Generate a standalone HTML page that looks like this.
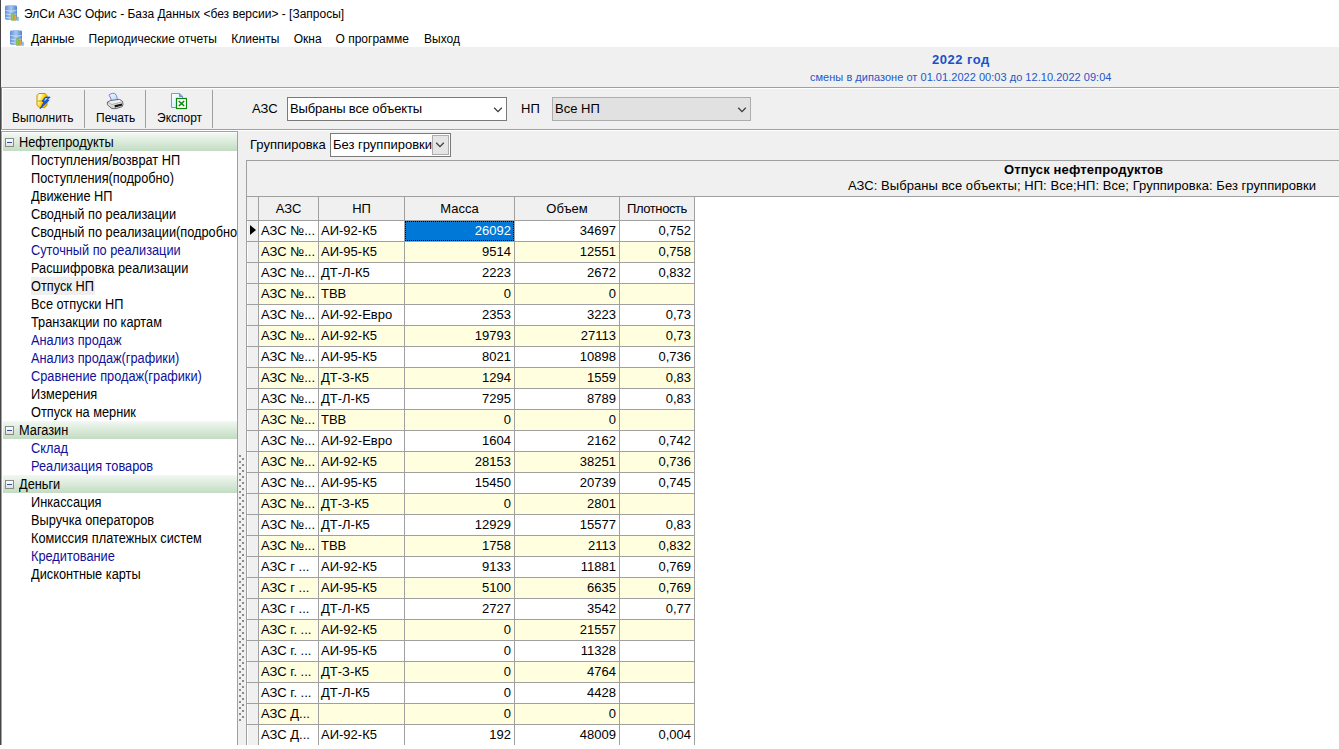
<!DOCTYPE html><html><head><meta charset="utf-8"><style>
*{box-sizing:border-box;margin:0;padding:0}
html,body{width:1339px;height:749px;overflow:hidden;background:#fff;font-family:"Liberation Sans",sans-serif;color:#000}
.a{position:absolute;white-space:nowrap}
svg{display:block}
.t12{font-size:12px;line-height:12px}
.t13{font-size:13px;line-height:13px}
.t11{font-size:11px;line-height:11px}
</style></head><body>
<div class="a" style="left:0;top:0;width:1px;height:745px;background:#464646"></div>
<div class="a" style="left:4px;top:5px;width:16px;height:16px"><svg width="16" height="16" viewBox="0 0 16 16">
<defs><linearGradient id="dbga" x1="0" x2="1" y1="0" y2="0"><stop offset="0" stop-color="#5b8fd8"/><stop offset="0.5" stop-color="#a9c8f0"/><stop offset="1" stop-color="#4f83d0"/></linearGradient></defs>
<path d="M1 1.5 Q1 0 7 0 Q13 0 13 1.5 L13 13.5 Q13 15 7 15 Q1 15 1 13.5 Z" fill="url(#dbga)"/>
<path d="M1.5 5.5 Q7 7 12.5 5.5 M1.5 9 Q7 10.5 12.5 9 M1.5 12.3 Q7 13.8 12.5 12.3" stroke="#d8e6f8" stroke-width="0.8" fill="none"/>
<rect x="7.2" y="8.5" width="2.8" height="7" rx="0.8" fill="#8cce50" stroke="#5a9a32" stroke-width="0.4"/>
<rect x="10" y="10" width="2.3" height="5.5" rx="0.7" fill="#f0a050" stroke="#c87a30" stroke-width="0.4"/>
<rect x="12.6" y="12" width="2" height="3.6" rx="0.7" fill="#78cfee" stroke="#4aa0c8" stroke-width="0.4"/>
</svg></div>
<div class="a t12" style="left:24px;top:8px">ЭлСи АЗС Офис - База Данных &lt;без версии&gt; - [Запросы]</div>
<div class="a" style="left:9px;top:30px;width:16px;height:16px"><svg width="16" height="16" viewBox="0 0 16 16">
<defs><linearGradient id="dbgb" x1="0" x2="1" y1="0" y2="0"><stop offset="0" stop-color="#5b8fd8"/><stop offset="0.5" stop-color="#a9c8f0"/><stop offset="1" stop-color="#4f83d0"/></linearGradient></defs>
<path d="M1 1.5 Q1 0 7 0 Q13 0 13 1.5 L13 13.5 Q13 15 7 15 Q1 15 1 13.5 Z" fill="url(#dbgb)"/>
<path d="M1.5 5.5 Q7 7 12.5 5.5 M1.5 9 Q7 10.5 12.5 9 M1.5 12.3 Q7 13.8 12.5 12.3" stroke="#d8e6f8" stroke-width="0.8" fill="none"/>
<rect x="7.2" y="8.5" width="2.8" height="7" rx="0.8" fill="#8cce50" stroke="#5a9a32" stroke-width="0.4"/>
<rect x="10" y="10" width="2.3" height="5.5" rx="0.7" fill="#f0a050" stroke="#c87a30" stroke-width="0.4"/>
<rect x="12.6" y="12" width="2" height="3.6" rx="0.7" fill="#78cfee" stroke="#4aa0c8" stroke-width="0.4"/>
</svg></div>
<div class="a t12" style="left:31px;top:33px">Данные</div>
<div class="a t12" style="left:88.6px;top:33px">Периодические отчеты</div>
<div class="a t12" style="left:231.2px;top:33px">Клиенты</div>
<div class="a t12" style="left:293.7px;top:33px">Окна</div>
<div class="a t12" style="left:335.5px;top:33px">О программе</div>
<div class="a t12" style="left:424px;top:33px">Выход</div>
<div class="a" style="left:1px;top:47px;width:1338px;height:702px;background:#f0f0f0"></div>
<div class="a" style="left:1px;top:87px;width:1338px;height:1px;background:#a0a0a0"></div>
<div class="a" style="left:1px;top:88px;width:1338px;height:1px;background:#fff"></div>
<div class="a t13" style="left:932px;top:53px;font-weight:bold;letter-spacing:0.5px;color:#2050c8">2022 год</div>
<div class="a t11" style="left:810px;top:72px;color:#2457c8;letter-spacing:0.03px">смены в дипазоне от 01.01.2022 00:03 до 12.10.2022 09:04</div>
<div class="a" style="left:36px;top:93px;width:16px;height:16px"><svg width="16" height="16" viewBox="0 0 16 16">
<defs><linearGradient id="yg" x1="0" x2="1" y1="0" y2="0.6"><stop offset="0" stop-color="#ffe860"/><stop offset="0.3" stop-color="#fffbd0"/><stop offset="0.6" stop-color="#ffd800"/><stop offset="1" stop-color="#e8b000"/></linearGradient></defs>
<path d="M1 2.4 L2.8 0.5 L9 0.5 L11 2.4 L11 12.3 L8.7 14.6 L3.4 14.6 L1 12.3 Z" fill="url(#yg)" stroke="#c89000" stroke-width="1"/>
<path d="M1.5 8 L7 8" stroke="#c89000" stroke-width="0.9"/>
<path d="M9.3 4 L14.2 4 L11.4 7 L13.2 7.3 L4 15.8 L7.6 9.4 L6 8 Z" fill="#1a58d8" stroke="#0a3cc0" stroke-width="0.6"/>
<path d="M9.6 5 L11.8 5 L9.5 7.6 L8 7.8 Z" fill="#a8d8ff"/>
</svg></div>
<div class="a" style="left:102px;top:90px;width:26px;height:22px"><svg width="26" height="22" viewBox="0 0 26 22">
<defs><linearGradient id="pg" x1="0" x2="1" y1="0" y2="1"><stop offset="0" stop-color="#f4faff"/><stop offset="1" stop-color="#a8d8fa"/></linearGradient>
<linearGradient id="bg2" x1="0" x2="0" y1="0" y2="1"><stop offset="0" stop-color="#ffffff"/><stop offset="1" stop-color="#c8c8c8"/></linearGradient></defs>
<path d="M7.2 4.6 L10.2 3.4 L12.8 3.4 L14.6 5.8 L15.2 8.4 L16.2 10 L9.6 11.2 L8.2 6.6 L7.2 6.2 Z" fill="url(#pg)" stroke="#8484d8" stroke-width="1"/>
<path d="M5.4 12 L9 10.4 L17.6 9.4 L20.6 11.4 L21 14.6 L20.2 16.6 L14.2 18.6 L9.8 18.6 L5.4 14.8 Z" fill="url(#bg2)" stroke="#5a5a5a" stroke-width="0.9"/>
<path d="M6 12.4 L10 14.6 L20.2 11.8" stroke="#9a9a9a" stroke-width="0.7" fill="none"/>
<path d="M12.4 15.2 L20 13.4 L20.2 15.4 L13 17.4 Z" fill="#151515"/>
</svg></div>
<div class="a" style="left:171px;top:93px;width:16px;height:17px"><svg width="16" height="17" viewBox="0 0 16 17">
<defs><linearGradient id="xg" x1="0" x2="1" y1="0" y2="1"><stop offset="0" stop-color="#ffffff"/><stop offset="1" stop-color="#bfe8ff"/></linearGradient></defs>
<path d="M0.5 0.5 L8.5 0.5 L11.5 3 L11.5 14.5 L0.5 14.5 Z" fill="url(#xg)" stroke="#8296d6" stroke-width="1"/>
<path d="M8.5 0.5 L8.5 3.5 L11.5 3.5" fill="#5cb4f0" stroke="#8a7ad0" stroke-width="0.9"/>
<rect x="5.5" y="5.5" width="10" height="10" fill="#fff" stroke="#0a8a0a" stroke-width="1.2"/>
<path d="M7.8 8 L13.2 13 M13.2 8 L7.8 13" stroke="#0a8a0a" stroke-width="1.6"/>
</svg></div>
<div class="a t12" style="left:12px;top:112px">Выполнить</div>
<div class="a t12" style="left:96px;top:112px">Печать</div>
<div class="a t12" style="left:157px;top:112px">Экспорт</div>
<div class="a" style="left:84px;top:90px;width:1px;height:38px;background:#a0a0a0"></div>
<div class="a" style="left:145px;top:90px;width:1px;height:38px;background:#a0a0a0"></div>
<div class="a" style="left:212px;top:90px;width:1px;height:38px;background:#a0a0a0"></div>
<div class="a t13" style="left:252px;top:102px">АЗС</div>
<div class="a" style="left:287px;top:97px;width:220px;height:24px;background:#fff;border:1px solid #7a7a7a"></div>
<div class="a t13" style="left:290px;top:102px;letter-spacing:-0.15px">Выбраны все объекты</div>
<div class="a" style="left:493px;top:106px;width:10px;height:7px"><svg width="10" height="7" viewBox="0 0 10 7"><path d="M1.2 1.8 L5 5.6 L8.8 1.8" stroke="#3a3a3a" stroke-width="1.25" fill="none"/></svg></div>
<div class="a t13" style="left:521px;top:102px">НП</div>
<div class="a" style="left:552px;top:97px;width:199px;height:24px;background:#e1e1e1;border:1px solid #adadad"></div>
<div class="a t13" style="left:555px;top:102px">Все НП</div>
<div class="a" style="left:737px;top:106px;width:10px;height:7px"><svg width="10" height="7" viewBox="0 0 10 7"><path d="M1.2 1.8 L5 5.6 L8.8 1.8" stroke="#3a3a3a" stroke-width="1.25" fill="none"/></svg></div>
<div class="a" style="left:1px;top:129px;width:1338px;height:1px;background:#a0a0a0"></div>
<div class="a" style="left:1px;top:130px;width:1338px;height:1px;background:#fff"></div>
<div class="a" style="left:1px;top:131px;width:237px;height:614px;background:#fff;border:1px solid #a0a4a8;border-bottom:none"></div>
<div class="a" style="left:1px;top:88px;width:1px;height:41px;background:#8a8a8a"></div>
<div class="a" style="left:2px;top:88px;width:1px;height:41px;background:#fff"></div>
<div class="a" style="left:3px;top:133px;width:234px;height:18px;background:linear-gradient(#f2f8f2,#c2dcc2)"></div>
<div class="a" style="left:5px;top:138px;width:9px;height:9px;border:1px solid #8a8a8a;background:linear-gradient(#fff,#e0e0e0)"><div style="position:absolute;left:1px;top:3px;width:5px;height:1px;background:#3050a0"></div></div>
<div class="a" style="left:19px;top:135px;font-size:14px;line-height:14px;transform:scaleX(0.912);transform-origin:0 0">Нефтепродукты</div>
<div class="a" style="left:31px;top:153px;width:206px;height:16px;overflow:hidden"><div style="font-size:14px;line-height:14px;color:#000;transform:scaleX(0.912);transform-origin:0 0;white-space:nowrap">Поступления/возврат НП</div></div>
<div class="a" style="left:31px;top:171px;width:206px;height:16px;overflow:hidden"><div style="font-size:14px;line-height:14px;color:#000;transform:scaleX(0.912);transform-origin:0 0;white-space:nowrap">Поступления(подробно)</div></div>
<div class="a" style="left:31px;top:189px;width:206px;height:16px;overflow:hidden"><div style="font-size:14px;line-height:14px;color:#000;transform:scaleX(0.912);transform-origin:0 0;white-space:nowrap">Движение НП</div></div>
<div class="a" style="left:31px;top:207px;width:206px;height:16px;overflow:hidden"><div style="font-size:14px;line-height:14px;color:#000;transform:scaleX(0.912);transform-origin:0 0;white-space:nowrap">Сводный по реализации</div></div>
<div class="a" style="left:31px;top:225px;width:206px;height:16px;overflow:hidden"><div style="font-size:14px;line-height:14px;color:#000;transform:scaleX(0.912);transform-origin:0 0;white-space:nowrap">Сводный по реализации(подробно)</div></div>
<div class="a" style="left:31px;top:243px;width:206px;height:16px;overflow:hidden"><div style="font-size:14px;line-height:14px;color:#10109a;transform:scaleX(0.912);transform-origin:0 0;white-space:nowrap">Суточный по реализации</div></div>
<div class="a" style="left:31px;top:261px;width:206px;height:16px;overflow:hidden"><div style="font-size:14px;line-height:14px;color:#000;transform:scaleX(0.912);transform-origin:0 0;white-space:nowrap">Расшифровка реализации</div></div>
<div class="a" style="left:31px;top:277px;width:64px;height:18px;background:#efefef"></div>
<div class="a" style="left:31px;top:279px;width:206px;height:16px;overflow:hidden"><div style="font-size:14px;line-height:14px;color:#000;transform:scaleX(0.912);transform-origin:0 0;white-space:nowrap">Отпуск НП</div></div>
<div class="a" style="left:31px;top:297px;width:206px;height:16px;overflow:hidden"><div style="font-size:14px;line-height:14px;color:#000;transform:scaleX(0.912);transform-origin:0 0;white-space:nowrap">Все отпуски НП</div></div>
<div class="a" style="left:31px;top:315px;width:206px;height:16px;overflow:hidden"><div style="font-size:14px;line-height:14px;color:#000;transform:scaleX(0.912);transform-origin:0 0;white-space:nowrap">Транзакции по картам</div></div>
<div class="a" style="left:31px;top:333px;width:206px;height:16px;overflow:hidden"><div style="font-size:14px;line-height:14px;color:#10109a;transform:scaleX(0.912);transform-origin:0 0;white-space:nowrap">Анализ продаж</div></div>
<div class="a" style="left:31px;top:351px;width:206px;height:16px;overflow:hidden"><div style="font-size:14px;line-height:14px;color:#10109a;transform:scaleX(0.912);transform-origin:0 0;white-space:nowrap">Анализ продаж(графики)</div></div>
<div class="a" style="left:31px;top:369px;width:206px;height:16px;overflow:hidden"><div style="font-size:14px;line-height:14px;color:#10109a;transform:scaleX(0.912);transform-origin:0 0;white-space:nowrap">Сравнение продаж(графики)</div></div>
<div class="a" style="left:31px;top:387px;width:206px;height:16px;overflow:hidden"><div style="font-size:14px;line-height:14px;color:#000;transform:scaleX(0.912);transform-origin:0 0;white-space:nowrap">Измерения</div></div>
<div class="a" style="left:31px;top:405px;width:206px;height:16px;overflow:hidden"><div style="font-size:14px;line-height:14px;color:#000;transform:scaleX(0.912);transform-origin:0 0;white-space:nowrap">Отпуск на мерник</div></div>
<div class="a" style="left:3px;top:421px;width:234px;height:18px;background:linear-gradient(#f2f8f2,#c2dcc2)"></div>
<div class="a" style="left:5px;top:426px;width:9px;height:9px;border:1px solid #8a8a8a;background:linear-gradient(#fff,#e0e0e0)"><div style="position:absolute;left:1px;top:3px;width:5px;height:1px;background:#3050a0"></div></div>
<div class="a" style="left:19px;top:423px;font-size:14px;line-height:14px;transform:scaleX(0.912);transform-origin:0 0">Магазин</div>
<div class="a" style="left:31px;top:441px;width:206px;height:16px;overflow:hidden"><div style="font-size:14px;line-height:14px;color:#10109a;transform:scaleX(0.912);transform-origin:0 0;white-space:nowrap">Склад</div></div>
<div class="a" style="left:31px;top:459px;width:206px;height:16px;overflow:hidden"><div style="font-size:14px;line-height:14px;color:#10109a;transform:scaleX(0.912);transform-origin:0 0;white-space:nowrap">Реализация товаров</div></div>
<div class="a" style="left:3px;top:475px;width:234px;height:18px;background:linear-gradient(#f2f8f2,#c2dcc2)"></div>
<div class="a" style="left:5px;top:480px;width:9px;height:9px;border:1px solid #8a8a8a;background:linear-gradient(#fff,#e0e0e0)"><div style="position:absolute;left:1px;top:3px;width:5px;height:1px;background:#3050a0"></div></div>
<div class="a" style="left:19px;top:477px;font-size:14px;line-height:14px;transform:scaleX(0.912);transform-origin:0 0">Деньги</div>
<div class="a" style="left:31px;top:495px;width:206px;height:16px;overflow:hidden"><div style="font-size:14px;line-height:14px;color:#000;transform:scaleX(0.912);transform-origin:0 0;white-space:nowrap">Инкассация</div></div>
<div class="a" style="left:31px;top:513px;width:206px;height:16px;overflow:hidden"><div style="font-size:14px;line-height:14px;color:#000;transform:scaleX(0.912);transform-origin:0 0;white-space:nowrap">Выручка операторов</div></div>
<div class="a" style="left:31px;top:531px;width:206px;height:16px;overflow:hidden"><div style="font-size:14px;line-height:14px;color:#000;transform:scaleX(0.912);transform-origin:0 0;white-space:nowrap">Комиссия платежных систем</div></div>
<div class="a" style="left:31px;top:549px;width:206px;height:16px;overflow:hidden"><div style="font-size:14px;line-height:14px;color:#10109a;transform:scaleX(0.912);transform-origin:0 0;white-space:nowrap">Кредитование</div></div>
<div class="a" style="left:31px;top:567px;width:206px;height:16px;overflow:hidden"><div style="font-size:14px;line-height:14px;color:#000;transform:scaleX(0.912);transform-origin:0 0;white-space:nowrap">Дисконтные карты</div></div>
<div class="a" style="left:239px;top:455px;width:2px;height:2px;background:#8c8c8c"></div>
<div class="a" style="left:242px;top:458px;width:2px;height:2px;background:#8c8c8c"></div>
<div class="a" style="left:239px;top:461px;width:2px;height:2px;background:#8c8c8c"></div>
<div class="a" style="left:242px;top:464px;width:2px;height:2px;background:#8c8c8c"></div>
<div class="a" style="left:239px;top:467px;width:2px;height:2px;background:#8c8c8c"></div>
<div class="a" style="left:242px;top:470px;width:2px;height:2px;background:#8c8c8c"></div>
<div class="a" style="left:239px;top:473px;width:2px;height:2px;background:#8c8c8c"></div>
<div class="a" style="left:242px;top:476px;width:2px;height:2px;background:#8c8c8c"></div>
<div class="a" style="left:239px;top:479px;width:2px;height:2px;background:#8c8c8c"></div>
<div class="a" style="left:242px;top:482px;width:2px;height:2px;background:#8c8c8c"></div>
<div class="a" style="left:239px;top:485px;width:2px;height:2px;background:#8c8c8c"></div>
<div class="a" style="left:242px;top:488px;width:2px;height:2px;background:#8c8c8c"></div>
<div class="a" style="left:239px;top:491px;width:2px;height:2px;background:#8c8c8c"></div>
<div class="a" style="left:242px;top:494px;width:2px;height:2px;background:#8c8c8c"></div>
<div class="a" style="left:239px;top:497px;width:2px;height:2px;background:#8c8c8c"></div>
<div class="a" style="left:242px;top:500px;width:2px;height:2px;background:#8c8c8c"></div>
<div class="a" style="left:239px;top:503px;width:2px;height:2px;background:#8c8c8c"></div>
<div class="a" style="left:242px;top:506px;width:2px;height:2px;background:#8c8c8c"></div>
<div class="a" style="left:239px;top:509px;width:2px;height:2px;background:#8c8c8c"></div>
<div class="a" style="left:242px;top:512px;width:2px;height:2px;background:#8c8c8c"></div>
<div class="a" style="left:239px;top:515px;width:2px;height:2px;background:#8c8c8c"></div>
<div class="a" style="left:242px;top:518px;width:2px;height:2px;background:#8c8c8c"></div>
<div class="a" style="left:239px;top:521px;width:2px;height:2px;background:#8c8c8c"></div>
<div class="a" style="left:242px;top:524px;width:2px;height:2px;background:#8c8c8c"></div>
<div class="a" style="left:239px;top:527px;width:2px;height:2px;background:#8c8c8c"></div>
<div class="a" style="left:242px;top:530px;width:2px;height:2px;background:#8c8c8c"></div>
<div class="a" style="left:239px;top:533px;width:2px;height:2px;background:#8c8c8c"></div>
<div class="a" style="left:242px;top:536px;width:2px;height:2px;background:#8c8c8c"></div>
<div class="a" style="left:239px;top:539px;width:2px;height:2px;background:#8c8c8c"></div>
<div class="a" style="left:242px;top:542px;width:2px;height:2px;background:#8c8c8c"></div>
<div class="a" style="left:239px;top:545px;width:2px;height:2px;background:#8c8c8c"></div>
<div class="a" style="left:242px;top:548px;width:2px;height:2px;background:#8c8c8c"></div>
<div class="a" style="left:239px;top:551px;width:2px;height:2px;background:#8c8c8c"></div>
<div class="a" style="left:242px;top:554px;width:2px;height:2px;background:#8c8c8c"></div>
<div class="a" style="left:239px;top:557px;width:2px;height:2px;background:#8c8c8c"></div>
<div class="a" style="left:242px;top:560px;width:2px;height:2px;background:#8c8c8c"></div>
<div class="a" style="left:239px;top:563px;width:2px;height:2px;background:#8c8c8c"></div>
<div class="a" style="left:242px;top:566px;width:2px;height:2px;background:#8c8c8c"></div>
<div class="a" style="left:239px;top:569px;width:2px;height:2px;background:#8c8c8c"></div>
<div class="a" style="left:242px;top:572px;width:2px;height:2px;background:#8c8c8c"></div>
<div class="a" style="left:239px;top:575px;width:2px;height:2px;background:#8c8c8c"></div>
<div class="a" style="left:242px;top:578px;width:2px;height:2px;background:#8c8c8c"></div>
<div class="a" style="left:239px;top:581px;width:2px;height:2px;background:#8c8c8c"></div>
<div class="a" style="left:242px;top:584px;width:2px;height:2px;background:#8c8c8c"></div>
<div class="a" style="left:239px;top:587px;width:2px;height:2px;background:#8c8c8c"></div>
<div class="a" style="left:242px;top:590px;width:2px;height:2px;background:#8c8c8c"></div>
<div class="a" style="left:239px;top:593px;width:2px;height:2px;background:#8c8c8c"></div>
<div class="a" style="left:242px;top:596px;width:2px;height:2px;background:#8c8c8c"></div>
<div class="a" style="left:239px;top:599px;width:2px;height:2px;background:#8c8c8c"></div>
<div class="a" style="left:242px;top:602px;width:2px;height:2px;background:#8c8c8c"></div>
<div class="a" style="left:239px;top:605px;width:2px;height:2px;background:#8c8c8c"></div>
<div class="a" style="left:242px;top:608px;width:2px;height:2px;background:#8c8c8c"></div>
<div class="a" style="left:239px;top:611px;width:2px;height:2px;background:#8c8c8c"></div>
<div class="a" style="left:242px;top:614px;width:2px;height:2px;background:#8c8c8c"></div>
<div class="a" style="left:239px;top:617px;width:2px;height:2px;background:#8c8c8c"></div>
<div class="a" style="left:242px;top:620px;width:2px;height:2px;background:#8c8c8c"></div>
<div class="a" style="left:239px;top:623px;width:2px;height:2px;background:#8c8c8c"></div>
<div class="a" style="left:242px;top:626px;width:2px;height:2px;background:#8c8c8c"></div>
<div class="a" style="left:239px;top:629px;width:2px;height:2px;background:#8c8c8c"></div>
<div class="a" style="left:242px;top:632px;width:2px;height:2px;background:#8c8c8c"></div>
<div class="a" style="left:239px;top:635px;width:2px;height:2px;background:#8c8c8c"></div>
<div class="a" style="left:242px;top:638px;width:2px;height:2px;background:#8c8c8c"></div>
<div class="a" style="left:239px;top:641px;width:2px;height:2px;background:#8c8c8c"></div>
<div class="a" style="left:242px;top:644px;width:2px;height:2px;background:#8c8c8c"></div>
<div class="a" style="left:239px;top:647px;width:2px;height:2px;background:#8c8c8c"></div>
<div class="a" style="left:242px;top:650px;width:2px;height:2px;background:#8c8c8c"></div>
<div class="a" style="left:239px;top:653px;width:2px;height:2px;background:#8c8c8c"></div>
<div class="a" style="left:242px;top:656px;width:2px;height:2px;background:#8c8c8c"></div>
<div class="a" style="left:239px;top:659px;width:2px;height:2px;background:#8c8c8c"></div>
<div class="a" style="left:242px;top:662px;width:2px;height:2px;background:#8c8c8c"></div>
<div class="a" style="left:239px;top:665px;width:2px;height:2px;background:#8c8c8c"></div>
<div class="a" style="left:242px;top:668px;width:2px;height:2px;background:#8c8c8c"></div>
<div class="a" style="left:239px;top:671px;width:2px;height:2px;background:#8c8c8c"></div>
<div class="a" style="left:242px;top:674px;width:2px;height:2px;background:#8c8c8c"></div>
<div class="a" style="left:239px;top:677px;width:2px;height:2px;background:#8c8c8c"></div>
<div class="a" style="left:242px;top:680px;width:2px;height:2px;background:#8c8c8c"></div>
<div class="a" style="left:239px;top:683px;width:2px;height:2px;background:#8c8c8c"></div>
<div class="a" style="left:242px;top:686px;width:2px;height:2px;background:#8c8c8c"></div>
<div class="a" style="left:239px;top:689px;width:2px;height:2px;background:#8c8c8c"></div>
<div class="a" style="left:242px;top:692px;width:2px;height:2px;background:#8c8c8c"></div>
<div class="a" style="left:239px;top:695px;width:2px;height:2px;background:#8c8c8c"></div>
<div class="a" style="left:242px;top:698px;width:2px;height:2px;background:#8c8c8c"></div>
<div class="a" style="left:239px;top:701px;width:2px;height:2px;background:#8c8c8c"></div>
<div class="a" style="left:242px;top:704px;width:2px;height:2px;background:#8c8c8c"></div>
<div class="a" style="left:239px;top:707px;width:2px;height:2px;background:#8c8c8c"></div>
<div class="a" style="left:242px;top:710px;width:2px;height:2px;background:#8c8c8c"></div>
<div class="a" style="left:239px;top:713px;width:2px;height:2px;background:#8c8c8c"></div>
<div class="a" style="left:242px;top:716px;width:2px;height:2px;background:#8c8c8c"></div>
<div class="a" style="left:239px;top:719px;width:2px;height:2px;background:#8c8c8c"></div>
<div class="a" style="left:237px;top:131px;width:1px;height:614px;background:#a0a0a0"></div>
<div class="a t13" style="left:250px;top:138px">Группировка</div>
<div class="a" style="left:330px;top:133px;width:121px;height:24px;background:#fff;border:1px solid #7a7a7a"></div>
<div class="a t13" style="left:333px;top:138px;width:99px;height:16px;overflow:hidden">Без группировки</div>
<div class="a" style="left:432px;top:135px;width:17px;height:20px;background:#e5e5e5;border:1px solid #adadad"></div>
<div class="a" style="left:435px;top:141px;width:10px;height:7px"><svg width="10" height="7" viewBox="0 0 10 7"><path d="M1.2 1.8 L5 5.6 L8.8 1.8" stroke="#3a3a3a" stroke-width="1.25" fill="none"/></svg></div>
<div class="a" style="left:246px;top:160px;width:1093px;height:36px;border-top:1px solid #a0a0a0;border-left:1px solid #a0a0a0"></div>
<div class="a t13" style="left:1004px;top:163px;font-weight:bold;letter-spacing:0.14px">Отпуск нефтепродуктов</div>
<div class="a t13" style="left:848px;top:179px;letter-spacing:0.05px">АЗС: Выбраны все объекты; НП: Все;НП: Все; Группировка: Без группировки</div>
<div class="a" style="left:246px;top:196px;width:449px;height:549px;background:#a0a0a0"></div>
<div class="a t13" style="left:247px;top:197px;width:11px;height:23px;background:#f0f0f0;text-align:center;padding-top:5px;"></div>
<div class="a t13" style="left:259px;top:197px;width:59px;height:23px;background:#f0f0f0;text-align:center;padding-top:5px;">АЗС</div>
<div class="a t13" style="left:319px;top:197px;width:85px;height:23px;background:#f0f0f0;text-align:center;padding-top:5px;">НП</div>
<div class="a t13" style="left:405px;top:197px;width:109px;height:23px;background:#f0f0f0;text-align:center;padding-top:5px;">Масса</div>
<div class="a t13" style="left:515px;top:197px;width:104px;height:23px;background:#f0f0f0;text-align:center;padding-top:5px;">Объем</div>
<div class="a t13" style="left:620px;top:197px;width:74px;height:23px;background:#f0f0f0;text-align:center;padding-top:5px;letter-spacing:-0.4px">Плотность</div>
<div class="a" style="left:247px;top:221px;width:11px;height:20px;background:#f0f0f0;border-left:1px solid #fff"></div>
<div class="a" style="left:250px;top:225px;width:0;height:0;border-top:5.5px solid transparent;border-bottom:5.5px solid transparent;border-left:6px solid #000"></div>
<div class="a t13" style="left:259px;top:221px;width:59px;height:20px;background:#fff;color:#000;text-align:left;padding-left:2px;padding-top:3px;overflow:hidden;">АЗС №...</div>
<div class="a t13" style="left:319px;top:221px;width:85px;height:20px;background:#fff;color:#000;text-align:left;padding-left:2px;padding-top:3px;overflow:hidden;">АИ-92-К5</div>
<div class="a t13" style="left:405px;top:221px;width:109px;height:20px;background:#0078d7;color:#fff;text-align:right;padding-right:3px;padding-top:3px;overflow:hidden;outline:1px dotted #000;outline-offset:-1px;">26092</div>
<div class="a t13" style="left:515px;top:221px;width:104px;height:20px;background:#fff;color:#000;text-align:right;padding-right:3px;padding-top:3px;overflow:hidden;">34697</div>
<div class="a t13" style="left:620px;top:221px;width:74px;height:20px;background:#fff;color:#000;text-align:right;padding-right:3px;padding-top:3px;overflow:hidden;">0,752</div>
<div class="a" style="left:247px;top:242px;width:11px;height:20px;background:#f0f0f0;border-left:1px solid #fff"></div>
<div class="a t13" style="left:259px;top:242px;width:59px;height:20px;background:#ffffe0;color:#000;text-align:left;padding-left:2px;padding-top:3px;overflow:hidden;">АЗС №...</div>
<div class="a t13" style="left:319px;top:242px;width:85px;height:20px;background:#ffffe0;color:#000;text-align:left;padding-left:2px;padding-top:3px;overflow:hidden;">АИ-95-К5</div>
<div class="a t13" style="left:405px;top:242px;width:109px;height:20px;background:#ffffe0;color:#000;text-align:right;padding-right:3px;padding-top:3px;overflow:hidden;">9514</div>
<div class="a t13" style="left:515px;top:242px;width:104px;height:20px;background:#ffffe0;color:#000;text-align:right;padding-right:3px;padding-top:3px;overflow:hidden;">12551</div>
<div class="a t13" style="left:620px;top:242px;width:74px;height:20px;background:#ffffe0;color:#000;text-align:right;padding-right:3px;padding-top:3px;overflow:hidden;">0,758</div>
<div class="a" style="left:247px;top:263px;width:11px;height:20px;background:#f0f0f0;border-left:1px solid #fff"></div>
<div class="a t13" style="left:259px;top:263px;width:59px;height:20px;background:#fff;color:#000;text-align:left;padding-left:2px;padding-top:3px;overflow:hidden;">АЗС №...</div>
<div class="a t13" style="left:319px;top:263px;width:85px;height:20px;background:#fff;color:#000;text-align:left;padding-left:2px;padding-top:3px;overflow:hidden;">ДТ-Л-К5</div>
<div class="a t13" style="left:405px;top:263px;width:109px;height:20px;background:#fff;color:#000;text-align:right;padding-right:3px;padding-top:3px;overflow:hidden;">2223</div>
<div class="a t13" style="left:515px;top:263px;width:104px;height:20px;background:#fff;color:#000;text-align:right;padding-right:3px;padding-top:3px;overflow:hidden;">2672</div>
<div class="a t13" style="left:620px;top:263px;width:74px;height:20px;background:#fff;color:#000;text-align:right;padding-right:3px;padding-top:3px;overflow:hidden;">0,832</div>
<div class="a" style="left:247px;top:284px;width:11px;height:20px;background:#f0f0f0;border-left:1px solid #fff"></div>
<div class="a t13" style="left:259px;top:284px;width:59px;height:20px;background:#ffffe0;color:#000;text-align:left;padding-left:2px;padding-top:3px;overflow:hidden;">АЗС №...</div>
<div class="a t13" style="left:319px;top:284px;width:85px;height:20px;background:#ffffe0;color:#000;text-align:left;padding-left:2px;padding-top:3px;overflow:hidden;">ТВВ</div>
<div class="a t13" style="left:405px;top:284px;width:109px;height:20px;background:#ffffe0;color:#000;text-align:right;padding-right:3px;padding-top:3px;overflow:hidden;">0</div>
<div class="a t13" style="left:515px;top:284px;width:104px;height:20px;background:#ffffe0;color:#000;text-align:right;padding-right:3px;padding-top:3px;overflow:hidden;">0</div>
<div class="a t13" style="left:620px;top:284px;width:74px;height:20px;background:#ffffe0;color:#000;text-align:right;padding-right:3px;padding-top:3px;overflow:hidden;"></div>
<div class="a" style="left:247px;top:305px;width:11px;height:20px;background:#f0f0f0;border-left:1px solid #fff"></div>
<div class="a t13" style="left:259px;top:305px;width:59px;height:20px;background:#fff;color:#000;text-align:left;padding-left:2px;padding-top:3px;overflow:hidden;">АЗС №...</div>
<div class="a t13" style="left:319px;top:305px;width:85px;height:20px;background:#fff;color:#000;text-align:left;padding-left:2px;padding-top:3px;overflow:hidden;">АИ-92-Евро</div>
<div class="a t13" style="left:405px;top:305px;width:109px;height:20px;background:#fff;color:#000;text-align:right;padding-right:3px;padding-top:3px;overflow:hidden;">2353</div>
<div class="a t13" style="left:515px;top:305px;width:104px;height:20px;background:#fff;color:#000;text-align:right;padding-right:3px;padding-top:3px;overflow:hidden;">3223</div>
<div class="a t13" style="left:620px;top:305px;width:74px;height:20px;background:#fff;color:#000;text-align:right;padding-right:3px;padding-top:3px;overflow:hidden;">0,73</div>
<div class="a" style="left:247px;top:326px;width:11px;height:20px;background:#f0f0f0;border-left:1px solid #fff"></div>
<div class="a t13" style="left:259px;top:326px;width:59px;height:20px;background:#ffffe0;color:#000;text-align:left;padding-left:2px;padding-top:3px;overflow:hidden;">АЗС №...</div>
<div class="a t13" style="left:319px;top:326px;width:85px;height:20px;background:#ffffe0;color:#000;text-align:left;padding-left:2px;padding-top:3px;overflow:hidden;">АИ-92-К5</div>
<div class="a t13" style="left:405px;top:326px;width:109px;height:20px;background:#ffffe0;color:#000;text-align:right;padding-right:3px;padding-top:3px;overflow:hidden;">19793</div>
<div class="a t13" style="left:515px;top:326px;width:104px;height:20px;background:#ffffe0;color:#000;text-align:right;padding-right:3px;padding-top:3px;overflow:hidden;">27113</div>
<div class="a t13" style="left:620px;top:326px;width:74px;height:20px;background:#ffffe0;color:#000;text-align:right;padding-right:3px;padding-top:3px;overflow:hidden;">0,73</div>
<div class="a" style="left:247px;top:347px;width:11px;height:20px;background:#f0f0f0;border-left:1px solid #fff"></div>
<div class="a t13" style="left:259px;top:347px;width:59px;height:20px;background:#fff;color:#000;text-align:left;padding-left:2px;padding-top:3px;overflow:hidden;">АЗС №...</div>
<div class="a t13" style="left:319px;top:347px;width:85px;height:20px;background:#fff;color:#000;text-align:left;padding-left:2px;padding-top:3px;overflow:hidden;">АИ-95-К5</div>
<div class="a t13" style="left:405px;top:347px;width:109px;height:20px;background:#fff;color:#000;text-align:right;padding-right:3px;padding-top:3px;overflow:hidden;">8021</div>
<div class="a t13" style="left:515px;top:347px;width:104px;height:20px;background:#fff;color:#000;text-align:right;padding-right:3px;padding-top:3px;overflow:hidden;">10898</div>
<div class="a t13" style="left:620px;top:347px;width:74px;height:20px;background:#fff;color:#000;text-align:right;padding-right:3px;padding-top:3px;overflow:hidden;">0,736</div>
<div class="a" style="left:247px;top:368px;width:11px;height:20px;background:#f0f0f0;border-left:1px solid #fff"></div>
<div class="a t13" style="left:259px;top:368px;width:59px;height:20px;background:#ffffe0;color:#000;text-align:left;padding-left:2px;padding-top:3px;overflow:hidden;">АЗС №...</div>
<div class="a t13" style="left:319px;top:368px;width:85px;height:20px;background:#ffffe0;color:#000;text-align:left;padding-left:2px;padding-top:3px;overflow:hidden;">ДТ-З-К5</div>
<div class="a t13" style="left:405px;top:368px;width:109px;height:20px;background:#ffffe0;color:#000;text-align:right;padding-right:3px;padding-top:3px;overflow:hidden;">1294</div>
<div class="a t13" style="left:515px;top:368px;width:104px;height:20px;background:#ffffe0;color:#000;text-align:right;padding-right:3px;padding-top:3px;overflow:hidden;">1559</div>
<div class="a t13" style="left:620px;top:368px;width:74px;height:20px;background:#ffffe0;color:#000;text-align:right;padding-right:3px;padding-top:3px;overflow:hidden;">0,83</div>
<div class="a" style="left:247px;top:389px;width:11px;height:20px;background:#f0f0f0;border-left:1px solid #fff"></div>
<div class="a t13" style="left:259px;top:389px;width:59px;height:20px;background:#fff;color:#000;text-align:left;padding-left:2px;padding-top:3px;overflow:hidden;">АЗС №...</div>
<div class="a t13" style="left:319px;top:389px;width:85px;height:20px;background:#fff;color:#000;text-align:left;padding-left:2px;padding-top:3px;overflow:hidden;">ДТ-Л-К5</div>
<div class="a t13" style="left:405px;top:389px;width:109px;height:20px;background:#fff;color:#000;text-align:right;padding-right:3px;padding-top:3px;overflow:hidden;">7295</div>
<div class="a t13" style="left:515px;top:389px;width:104px;height:20px;background:#fff;color:#000;text-align:right;padding-right:3px;padding-top:3px;overflow:hidden;">8789</div>
<div class="a t13" style="left:620px;top:389px;width:74px;height:20px;background:#fff;color:#000;text-align:right;padding-right:3px;padding-top:3px;overflow:hidden;">0,83</div>
<div class="a" style="left:247px;top:410px;width:11px;height:20px;background:#f0f0f0;border-left:1px solid #fff"></div>
<div class="a t13" style="left:259px;top:410px;width:59px;height:20px;background:#ffffe0;color:#000;text-align:left;padding-left:2px;padding-top:3px;overflow:hidden;">АЗС №...</div>
<div class="a t13" style="left:319px;top:410px;width:85px;height:20px;background:#ffffe0;color:#000;text-align:left;padding-left:2px;padding-top:3px;overflow:hidden;">ТВВ</div>
<div class="a t13" style="left:405px;top:410px;width:109px;height:20px;background:#ffffe0;color:#000;text-align:right;padding-right:3px;padding-top:3px;overflow:hidden;">0</div>
<div class="a t13" style="left:515px;top:410px;width:104px;height:20px;background:#ffffe0;color:#000;text-align:right;padding-right:3px;padding-top:3px;overflow:hidden;">0</div>
<div class="a t13" style="left:620px;top:410px;width:74px;height:20px;background:#ffffe0;color:#000;text-align:right;padding-right:3px;padding-top:3px;overflow:hidden;"></div>
<div class="a" style="left:247px;top:431px;width:11px;height:20px;background:#f0f0f0;border-left:1px solid #fff"></div>
<div class="a t13" style="left:259px;top:431px;width:59px;height:20px;background:#fff;color:#000;text-align:left;padding-left:2px;padding-top:3px;overflow:hidden;">АЗС №...</div>
<div class="a t13" style="left:319px;top:431px;width:85px;height:20px;background:#fff;color:#000;text-align:left;padding-left:2px;padding-top:3px;overflow:hidden;">АИ-92-Евро</div>
<div class="a t13" style="left:405px;top:431px;width:109px;height:20px;background:#fff;color:#000;text-align:right;padding-right:3px;padding-top:3px;overflow:hidden;">1604</div>
<div class="a t13" style="left:515px;top:431px;width:104px;height:20px;background:#fff;color:#000;text-align:right;padding-right:3px;padding-top:3px;overflow:hidden;">2162</div>
<div class="a t13" style="left:620px;top:431px;width:74px;height:20px;background:#fff;color:#000;text-align:right;padding-right:3px;padding-top:3px;overflow:hidden;">0,742</div>
<div class="a" style="left:247px;top:452px;width:11px;height:20px;background:#f0f0f0;border-left:1px solid #fff"></div>
<div class="a t13" style="left:259px;top:452px;width:59px;height:20px;background:#ffffe0;color:#000;text-align:left;padding-left:2px;padding-top:3px;overflow:hidden;">АЗС №...</div>
<div class="a t13" style="left:319px;top:452px;width:85px;height:20px;background:#ffffe0;color:#000;text-align:left;padding-left:2px;padding-top:3px;overflow:hidden;">АИ-92-К5</div>
<div class="a t13" style="left:405px;top:452px;width:109px;height:20px;background:#ffffe0;color:#000;text-align:right;padding-right:3px;padding-top:3px;overflow:hidden;">28153</div>
<div class="a t13" style="left:515px;top:452px;width:104px;height:20px;background:#ffffe0;color:#000;text-align:right;padding-right:3px;padding-top:3px;overflow:hidden;">38251</div>
<div class="a t13" style="left:620px;top:452px;width:74px;height:20px;background:#ffffe0;color:#000;text-align:right;padding-right:3px;padding-top:3px;overflow:hidden;">0,736</div>
<div class="a" style="left:247px;top:473px;width:11px;height:20px;background:#f0f0f0;border-left:1px solid #fff"></div>
<div class="a t13" style="left:259px;top:473px;width:59px;height:20px;background:#fff;color:#000;text-align:left;padding-left:2px;padding-top:3px;overflow:hidden;">АЗС №...</div>
<div class="a t13" style="left:319px;top:473px;width:85px;height:20px;background:#fff;color:#000;text-align:left;padding-left:2px;padding-top:3px;overflow:hidden;">АИ-95-К5</div>
<div class="a t13" style="left:405px;top:473px;width:109px;height:20px;background:#fff;color:#000;text-align:right;padding-right:3px;padding-top:3px;overflow:hidden;">15450</div>
<div class="a t13" style="left:515px;top:473px;width:104px;height:20px;background:#fff;color:#000;text-align:right;padding-right:3px;padding-top:3px;overflow:hidden;">20739</div>
<div class="a t13" style="left:620px;top:473px;width:74px;height:20px;background:#fff;color:#000;text-align:right;padding-right:3px;padding-top:3px;overflow:hidden;">0,745</div>
<div class="a" style="left:247px;top:494px;width:11px;height:20px;background:#f0f0f0;border-left:1px solid #fff"></div>
<div class="a t13" style="left:259px;top:494px;width:59px;height:20px;background:#ffffe0;color:#000;text-align:left;padding-left:2px;padding-top:3px;overflow:hidden;">АЗС №...</div>
<div class="a t13" style="left:319px;top:494px;width:85px;height:20px;background:#ffffe0;color:#000;text-align:left;padding-left:2px;padding-top:3px;overflow:hidden;">ДТ-З-К5</div>
<div class="a t13" style="left:405px;top:494px;width:109px;height:20px;background:#ffffe0;color:#000;text-align:right;padding-right:3px;padding-top:3px;overflow:hidden;">0</div>
<div class="a t13" style="left:515px;top:494px;width:104px;height:20px;background:#ffffe0;color:#000;text-align:right;padding-right:3px;padding-top:3px;overflow:hidden;">2801</div>
<div class="a t13" style="left:620px;top:494px;width:74px;height:20px;background:#ffffe0;color:#000;text-align:right;padding-right:3px;padding-top:3px;overflow:hidden;"></div>
<div class="a" style="left:247px;top:515px;width:11px;height:20px;background:#f0f0f0;border-left:1px solid #fff"></div>
<div class="a t13" style="left:259px;top:515px;width:59px;height:20px;background:#fff;color:#000;text-align:left;padding-left:2px;padding-top:3px;overflow:hidden;">АЗС №...</div>
<div class="a t13" style="left:319px;top:515px;width:85px;height:20px;background:#fff;color:#000;text-align:left;padding-left:2px;padding-top:3px;overflow:hidden;">ДТ-Л-К5</div>
<div class="a t13" style="left:405px;top:515px;width:109px;height:20px;background:#fff;color:#000;text-align:right;padding-right:3px;padding-top:3px;overflow:hidden;">12929</div>
<div class="a t13" style="left:515px;top:515px;width:104px;height:20px;background:#fff;color:#000;text-align:right;padding-right:3px;padding-top:3px;overflow:hidden;">15577</div>
<div class="a t13" style="left:620px;top:515px;width:74px;height:20px;background:#fff;color:#000;text-align:right;padding-right:3px;padding-top:3px;overflow:hidden;">0,83</div>
<div class="a" style="left:247px;top:536px;width:11px;height:20px;background:#f0f0f0;border-left:1px solid #fff"></div>
<div class="a t13" style="left:259px;top:536px;width:59px;height:20px;background:#ffffe0;color:#000;text-align:left;padding-left:2px;padding-top:3px;overflow:hidden;">АЗС №...</div>
<div class="a t13" style="left:319px;top:536px;width:85px;height:20px;background:#ffffe0;color:#000;text-align:left;padding-left:2px;padding-top:3px;overflow:hidden;">ТВВ</div>
<div class="a t13" style="left:405px;top:536px;width:109px;height:20px;background:#ffffe0;color:#000;text-align:right;padding-right:3px;padding-top:3px;overflow:hidden;">1758</div>
<div class="a t13" style="left:515px;top:536px;width:104px;height:20px;background:#ffffe0;color:#000;text-align:right;padding-right:3px;padding-top:3px;overflow:hidden;">2113</div>
<div class="a t13" style="left:620px;top:536px;width:74px;height:20px;background:#ffffe0;color:#000;text-align:right;padding-right:3px;padding-top:3px;overflow:hidden;">0,832</div>
<div class="a" style="left:247px;top:557px;width:11px;height:20px;background:#f0f0f0;border-left:1px solid #fff"></div>
<div class="a t13" style="left:259px;top:557px;width:59px;height:20px;background:#fff;color:#000;text-align:left;padding-left:2px;padding-top:3px;overflow:hidden;">АЗС г ...</div>
<div class="a t13" style="left:319px;top:557px;width:85px;height:20px;background:#fff;color:#000;text-align:left;padding-left:2px;padding-top:3px;overflow:hidden;">АИ-92-К5</div>
<div class="a t13" style="left:405px;top:557px;width:109px;height:20px;background:#fff;color:#000;text-align:right;padding-right:3px;padding-top:3px;overflow:hidden;">9133</div>
<div class="a t13" style="left:515px;top:557px;width:104px;height:20px;background:#fff;color:#000;text-align:right;padding-right:3px;padding-top:3px;overflow:hidden;">11881</div>
<div class="a t13" style="left:620px;top:557px;width:74px;height:20px;background:#fff;color:#000;text-align:right;padding-right:3px;padding-top:3px;overflow:hidden;">0,769</div>
<div class="a" style="left:247px;top:578px;width:11px;height:20px;background:#f0f0f0;border-left:1px solid #fff"></div>
<div class="a t13" style="left:259px;top:578px;width:59px;height:20px;background:#ffffe0;color:#000;text-align:left;padding-left:2px;padding-top:3px;overflow:hidden;">АЗС г ...</div>
<div class="a t13" style="left:319px;top:578px;width:85px;height:20px;background:#ffffe0;color:#000;text-align:left;padding-left:2px;padding-top:3px;overflow:hidden;">АИ-95-К5</div>
<div class="a t13" style="left:405px;top:578px;width:109px;height:20px;background:#ffffe0;color:#000;text-align:right;padding-right:3px;padding-top:3px;overflow:hidden;">5100</div>
<div class="a t13" style="left:515px;top:578px;width:104px;height:20px;background:#ffffe0;color:#000;text-align:right;padding-right:3px;padding-top:3px;overflow:hidden;">6635</div>
<div class="a t13" style="left:620px;top:578px;width:74px;height:20px;background:#ffffe0;color:#000;text-align:right;padding-right:3px;padding-top:3px;overflow:hidden;">0,769</div>
<div class="a" style="left:247px;top:599px;width:11px;height:20px;background:#f0f0f0;border-left:1px solid #fff"></div>
<div class="a t13" style="left:259px;top:599px;width:59px;height:20px;background:#fff;color:#000;text-align:left;padding-left:2px;padding-top:3px;overflow:hidden;">АЗС г ...</div>
<div class="a t13" style="left:319px;top:599px;width:85px;height:20px;background:#fff;color:#000;text-align:left;padding-left:2px;padding-top:3px;overflow:hidden;">ДТ-Л-К5</div>
<div class="a t13" style="left:405px;top:599px;width:109px;height:20px;background:#fff;color:#000;text-align:right;padding-right:3px;padding-top:3px;overflow:hidden;">2727</div>
<div class="a t13" style="left:515px;top:599px;width:104px;height:20px;background:#fff;color:#000;text-align:right;padding-right:3px;padding-top:3px;overflow:hidden;">3542</div>
<div class="a t13" style="left:620px;top:599px;width:74px;height:20px;background:#fff;color:#000;text-align:right;padding-right:3px;padding-top:3px;overflow:hidden;">0,77</div>
<div class="a" style="left:247px;top:620px;width:11px;height:20px;background:#f0f0f0;border-left:1px solid #fff"></div>
<div class="a t13" style="left:259px;top:620px;width:59px;height:20px;background:#ffffe0;color:#000;text-align:left;padding-left:2px;padding-top:3px;overflow:hidden;">АЗС г. ...</div>
<div class="a t13" style="left:319px;top:620px;width:85px;height:20px;background:#ffffe0;color:#000;text-align:left;padding-left:2px;padding-top:3px;overflow:hidden;">АИ-92-К5</div>
<div class="a t13" style="left:405px;top:620px;width:109px;height:20px;background:#ffffe0;color:#000;text-align:right;padding-right:3px;padding-top:3px;overflow:hidden;">0</div>
<div class="a t13" style="left:515px;top:620px;width:104px;height:20px;background:#ffffe0;color:#000;text-align:right;padding-right:3px;padding-top:3px;overflow:hidden;">21557</div>
<div class="a t13" style="left:620px;top:620px;width:74px;height:20px;background:#ffffe0;color:#000;text-align:right;padding-right:3px;padding-top:3px;overflow:hidden;"></div>
<div class="a" style="left:247px;top:641px;width:11px;height:20px;background:#f0f0f0;border-left:1px solid #fff"></div>
<div class="a t13" style="left:259px;top:641px;width:59px;height:20px;background:#fff;color:#000;text-align:left;padding-left:2px;padding-top:3px;overflow:hidden;">АЗС г. ...</div>
<div class="a t13" style="left:319px;top:641px;width:85px;height:20px;background:#fff;color:#000;text-align:left;padding-left:2px;padding-top:3px;overflow:hidden;">АИ-95-К5</div>
<div class="a t13" style="left:405px;top:641px;width:109px;height:20px;background:#fff;color:#000;text-align:right;padding-right:3px;padding-top:3px;overflow:hidden;">0</div>
<div class="a t13" style="left:515px;top:641px;width:104px;height:20px;background:#fff;color:#000;text-align:right;padding-right:3px;padding-top:3px;overflow:hidden;">11328</div>
<div class="a t13" style="left:620px;top:641px;width:74px;height:20px;background:#fff;color:#000;text-align:right;padding-right:3px;padding-top:3px;overflow:hidden;"></div>
<div class="a" style="left:247px;top:662px;width:11px;height:20px;background:#f0f0f0;border-left:1px solid #fff"></div>
<div class="a t13" style="left:259px;top:662px;width:59px;height:20px;background:#ffffe0;color:#000;text-align:left;padding-left:2px;padding-top:3px;overflow:hidden;">АЗС г. ...</div>
<div class="a t13" style="left:319px;top:662px;width:85px;height:20px;background:#ffffe0;color:#000;text-align:left;padding-left:2px;padding-top:3px;overflow:hidden;">ДТ-З-К5</div>
<div class="a t13" style="left:405px;top:662px;width:109px;height:20px;background:#ffffe0;color:#000;text-align:right;padding-right:3px;padding-top:3px;overflow:hidden;">0</div>
<div class="a t13" style="left:515px;top:662px;width:104px;height:20px;background:#ffffe0;color:#000;text-align:right;padding-right:3px;padding-top:3px;overflow:hidden;">4764</div>
<div class="a t13" style="left:620px;top:662px;width:74px;height:20px;background:#ffffe0;color:#000;text-align:right;padding-right:3px;padding-top:3px;overflow:hidden;"></div>
<div class="a" style="left:247px;top:683px;width:11px;height:20px;background:#f0f0f0;border-left:1px solid #fff"></div>
<div class="a t13" style="left:259px;top:683px;width:59px;height:20px;background:#fff;color:#000;text-align:left;padding-left:2px;padding-top:3px;overflow:hidden;">АЗС г. ...</div>
<div class="a t13" style="left:319px;top:683px;width:85px;height:20px;background:#fff;color:#000;text-align:left;padding-left:2px;padding-top:3px;overflow:hidden;">ДТ-Л-К5</div>
<div class="a t13" style="left:405px;top:683px;width:109px;height:20px;background:#fff;color:#000;text-align:right;padding-right:3px;padding-top:3px;overflow:hidden;">0</div>
<div class="a t13" style="left:515px;top:683px;width:104px;height:20px;background:#fff;color:#000;text-align:right;padding-right:3px;padding-top:3px;overflow:hidden;">4428</div>
<div class="a t13" style="left:620px;top:683px;width:74px;height:20px;background:#fff;color:#000;text-align:right;padding-right:3px;padding-top:3px;overflow:hidden;"></div>
<div class="a" style="left:247px;top:704px;width:11px;height:20px;background:#f0f0f0;border-left:1px solid #fff"></div>
<div class="a t13" style="left:259px;top:704px;width:59px;height:20px;background:#ffffe0;color:#000;text-align:left;padding-left:2px;padding-top:3px;overflow:hidden;">АЗС Д...</div>
<div class="a t13" style="left:319px;top:704px;width:85px;height:20px;background:#ffffe0;color:#000;text-align:left;padding-left:2px;padding-top:3px;overflow:hidden;"></div>
<div class="a t13" style="left:405px;top:704px;width:109px;height:20px;background:#ffffe0;color:#000;text-align:right;padding-right:3px;padding-top:3px;overflow:hidden;">0</div>
<div class="a t13" style="left:515px;top:704px;width:104px;height:20px;background:#ffffe0;color:#000;text-align:right;padding-right:3px;padding-top:3px;overflow:hidden;">0</div>
<div class="a t13" style="left:620px;top:704px;width:74px;height:20px;background:#ffffe0;color:#000;text-align:right;padding-right:3px;padding-top:3px;overflow:hidden;"></div>
<div class="a" style="left:247px;top:725px;width:11px;height:20px;background:#f0f0f0;border-left:1px solid #fff"></div>
<div class="a t13" style="left:259px;top:725px;width:59px;height:20px;background:#fff;color:#000;text-align:left;padding-left:2px;padding-top:3px;overflow:hidden;">АЗС Д...</div>
<div class="a t13" style="left:319px;top:725px;width:85px;height:20px;background:#fff;color:#000;text-align:left;padding-left:2px;padding-top:3px;overflow:hidden;">АИ-92-К5</div>
<div class="a t13" style="left:405px;top:725px;width:109px;height:20px;background:#fff;color:#000;text-align:right;padding-right:3px;padding-top:3px;overflow:hidden;">192</div>
<div class="a t13" style="left:515px;top:725px;width:104px;height:20px;background:#fff;color:#000;text-align:right;padding-right:3px;padding-top:3px;overflow:hidden;">48009</div>
<div class="a t13" style="left:620px;top:725px;width:74px;height:20px;background:#fff;color:#000;text-align:right;padding-right:3px;padding-top:3px;overflow:hidden;">0,004</div>
<div class="a" style="left:695px;top:197px;width:644px;height:548px;background:#fff"></div>
<div class="a" style="left:246px;top:196px;width:1093px;height:1px;background:#a0a0a0"></div>
<div class="a" style="left:1px;top:745px;width:1338px;height:4px;background:#fff"></div>
</body></html>
